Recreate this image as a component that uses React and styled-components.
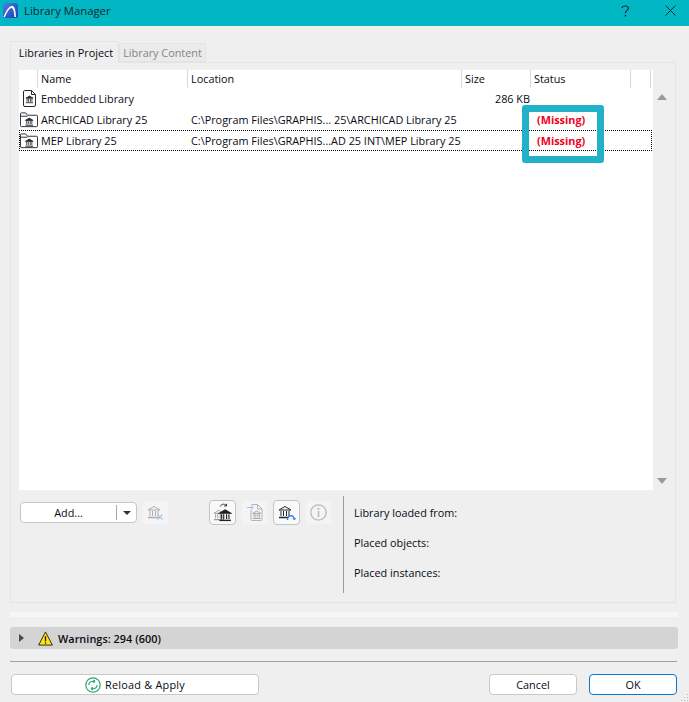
import React from "react";
import styled, { createGlobalStyle } from "styled-components";

const Global = createGlobalStyle`
  html, body { margin: 0; padding: 0; background: #efefef; }
  body { font-family: "Open Sans", "Noto Sans", "Liberation Sans", sans-serif; font-size: 10.85px; color: #0a0a14; }
`;

const Dialog = styled.div`
  width: 689px; height: 702px; overflow: hidden; position: relative;
  display: flex; flex-direction: column; background: #efefef;
`;
const TitleBar = styled.div`
  box-sizing: border-box; height: 26px; flex: none; background: #00b7c3; display: flex; align-items: center;
  padding: 0 0 5px 3px;
`;
const TitleText = styled.div`font-size: 11.3px; color: #10282c; margin-left: 6px; flex: 1;`;
const TitleButton = styled.div`
  width: ${p => p.$w}px; display: flex; justify-content: center; align-items: center; color: #10282c;
`;
const TabStrip = styled.div`
  display: flex; align-items: flex-end; height: 21px; margin: 15px 0 0 10px; position: relative; z-index: 1; flex: none;
`;
const Tab = styled.div`
  box-sizing: border-box; display: flex; align-items: center; justify-content: center;
  width: ${p => p.$w}px;
  height: ${p => (p.$active ? 22 : 19)}px;
  margin-bottom: ${p => (p.$active ? -1 : 0)}px;
  padding-left: ${p => (p.$active ? 3 : 0)}px;
  background: ${p => (p.$active ? "#efefef" : "#ebebeb")};
  color: ${p => (p.$active ? "#0a0a14" : "#858585")};
  border: 1px solid #e4e4e4;
  border-bottom: ${p => (p.$active ? "none" : "1px solid #e4e4e4")};
  border-radius: 2px 2px 0 0;
`;
const Panel = styled.div`
  box-sizing: border-box; width: 666px; height: 541px; margin-left: 10px; flex: none;
  border: 1px solid #e4e4e4; padding: 7px 0 0 8px;
`;
const ListArea = styled.div`display: flex; height: 420px;`;
const List = styled.div`
  width: 634px; background: #fff; position: relative; flex: none;
`;
const cols = "19px 150px 274px 69px 100px 20px";
const HeaderRow = styled.div`
  display: grid; grid-template-columns: ${cols}; height: 18px; width: 632px;
`;
const HeaderCell = styled.div`
  box-sizing: border-box; border-right: 1px solid #d9d9d9; padding-left: 3px; line-height: 18px;
`;
const Row = styled.div`
  display: grid; grid-template-columns: ${cols}; height: 21px; width: 633px;
  align-items: center; white-space: nowrap;
  outline: ${p => (p.$focus ? "1px dotted #000" : "none")};
  outline-offset: -1px;
`;
const IconCell = styled.div`display: flex; padding-left: ${p => (p.$doc ? 4 : 1)}px;`;
const Cell = styled.div`padding-left: 3px;`;
const SizeCell = styled.div`text-align: right; padding-right: 1px;`;
const Missing = styled.div`color: #f2001e; font-weight: 700; padding-left: 6px;`;
const Highlight = styled.div`
  position: absolute; left: 503px; top: 35px; width: 82px; height: 58px; box-sizing: border-box;
  border: 7px solid #23b0c9; border-radius: 3px;
`;
const ScrollColumn = styled.div`
  flex: none; width: 18px; display: flex; flex-direction: column; justify-content: space-between;
  align-items: center; padding: 24px 0 6px; box-sizing: border-box;
`;
const Arrow = styled.div`
  width: 0; height: 0; border-left: 5px solid transparent; border-right: 5px solid transparent;
  ${p => (p.$down ? "border-top: 6px solid #9a9a9a;" : "border-bottom: 6px solid #9a9a9a;")}
`;
const Lower = styled.div`display: flex; height: 97px; margin-top: 6px;`;
const ToolArea = styled.div`width: 324px; flex: none; display: flex; align-items: flex-start; padding-top: 4px; box-sizing: border-box;`;
const AddButton = styled.div`
  box-sizing: border-box; width: 117px; height: 21px; margin: 2px 0 0 1px; background: #fff;
  border: 1px solid #c6c6c6; border-radius: 4px; display: flex; align-items: center; flex: none;
`;
const AddLabel = styled.div`width: 95px; text-align: center; border-right: 1px solid #a8a8a8; line-height: 15px;`;
const Caret = styled.div`
  margin-left: 6px; width: 0; height: 0; border-left: 4px solid transparent; border-right: 4px solid transparent;
  border-top: 4px solid #333;
`;
const IconButton = styled.div`
  box-sizing: border-box; width: 27px; height: 25px; flex: none; margin-left: ${p => p.$ml ?? 5}px;
  display: flex; align-items: center; justify-content: center; border-radius: 4px;
  background: ${p => (p.$on ? "#f9f9f9" : "#f4f4f4")};
  border: 1px solid ${p => (p.$on ? "#c4c4c4" : "#f0f0f0")};
`;
const InfoColumn = styled.div`
  border-left: 1px solid #9c9c9c; padding: 10px 0 0 10px; display: flex; flex-direction: column; gap: 16px;
`;
const InfoLabel = styled.div`line-height: 14px;`;
const Strip = styled.div`height: 5px; width: 668px; margin: 9px 0 0 10px; background: #f6f6f6; flex: none;`;
const WarningBar = styled.div`
  height: 22px; width: 668px; margin: 10px 0 0 10px; background: #d4d4d4; border-radius: 3px; flex: none;
  display: flex; align-items: center; font-weight: 600;
`;
const Chevron = styled.div`
  width: 0; height: 0; margin-left: 9px; border-top: 4px solid transparent; border-bottom: 4px solid transparent;
  border-left: 5px solid #4a4a4a;
`;
const WarnIconBox = styled.div`margin-left: 14px; display: flex;`;
const WarnText = styled.div`margin-left: 5px; letter-spacing: .05px;`;
const Rule = styled.div`height: 1px; width: 667px; margin: 12px 0 0 10px; background: #a2a2a2; flex: none;`;
const Footer = styled.div`display: flex; width: 666px; margin: 12px 0 0 11px; height: 21px; flex: none;`;
const Button = styled.div`
  box-sizing: border-box; height: 21px; width: ${p => p.$w}px; margin-left: ${p => p.$ml ?? 0}px; flex: none;
  background: #fff; border: 1px solid ${p => (p.$primary ? "#0b78d0" : "#c8c8c8")}; border-radius: 4px;
  display: flex; align-items: center; justify-content: center; gap: 4px;
  letter-spacing: ${p => p.$track ?? 0}px;
`;
const Grip = styled.div`
  position: absolute; right: 1px; bottom: 1px; width: 8px; height: 8px;
  background-image: radial-gradient(circle, #b5b5b5 1px, transparent 1px);
  background-size: 3px 3px;
  clip-path: polygon(100% 0, 100% 100%, 0 100%);
`;

const Temple = ({ c = "#23292e", sw = 1, solid = true }) => (
  <g stroke={c} fill="none" strokeWidth={sw}>
    <path d="M1 5 L7 1.5 L13 5 Z" fill={solid ? c : "none"} />
    <path d="M3 6v5M5.500 6v5M8.500 6v5M11 6v5" />
    <path d="M1 12.500h12" strokeWidth="1.500" />
  </g>
);
const Logo = () => (
  <svg width="15" height="15" viewBox="0 0 15 15">
    <defs>
      <linearGradient id="lg" x1="0" y1="0" x2="1" y2="1">
        <stop offset="0" stopColor="#4a7fe8" />
        <stop offset="1" stopColor="#1c3fae" />
      </linearGradient>
    </defs>
    <rect width="15" height="15" rx="2.500" fill="url(#lg)" />
    <path d="M0.500 14 C4 5 7 3 9 3 C11 3 12.500 5 13 14 L11.500 14 C11 8 10 5 8.500 5 C6.500 5 4 9 2 14 Z" fill="#fff" />
  </svg>
);
const DocIcon = () => (
  <svg width="13" height="17" viewBox="0 0 13 17">
    <path d="M1.500 .5H8.500L12.500 4.500V15A1.500 1.500 0 0 1 11 16.500H2A1.500 1.500 0 0 1 .5 15V2A1.500 1.500 0 0 1 1.500 .5Z" fill="#fff" stroke="#23292e" />
    <path d="M8.500 .5V4.500H12.500" fill="none" stroke="#23292e" />
    <g transform="translate(2.300 5.200) scale(.6)"><Temple sw={1.400} /></g>
  </svg>
);
const FolderIcon = () => (
  <svg width="19" height="16" viewBox="0 0 19 16">
    <path d="M.5 14V1.500A1 1 0 0 1 1.500 .5H6L8 3H17.500A1 1 0 0 1 18.500 4V14A1 1 0 0 1 17.500 15H1.500A1 1 0 0 1 .5 14Z" fill="#fff" stroke="#23292e" />
    <path d="M.5 4H8" fill="none" stroke="#23292e" />
    <g transform="translate(5 5) scale(.68)"><Temple sw={1.300} /></g>
  </svg>
);
const DeleteLib = () => (
  <svg width="18" height="16" viewBox="0 0 18 16">
    <Temple c="#adadad" solid={false} />
    <path d="M10.500 9.500l5 5M15.500 9.500l-5 5" stroke="#a9c8f0" strokeWidth="1.300" />
  </svg>
);
const SwapLib = () => (
  <svg width="19" height="19" viewBox="0 0 19 19">
    <g transform="translate(0 6) scale(.85)"><Temple c="#9a9a9a" solid={false} /></g>
    <g transform="translate(5.500 5.500) scale(.95)"><Temple c="#1e2428" sw={1.200} /></g>
    <path d="M7 3.500C9 .5 12 .5 13.500 3M13.500 3V.8M13.500 3H11.200" fill="none" stroke="#333" strokeWidth="1" />
  </svg>
);
const ImportDoc = () => (
  <svg width="16" height="17" viewBox="0 0 16 17">
    <path d="M4.500 .5H10.500L15 5V15.500A1 1 0 0 1 14 16.500H5A1 1 0 0 1 4 15.500V6" fill="#f4f4f4" stroke="#b4b4b4" />
    <path d="M10.500 .5V5H15" fill="none" stroke="#b4b4b4" />
    <g transform="translate(5 6) scale(.68)"><Temple c="#a6a6a6" sw={1.300} solid={false} /></g>
    <path d="M0 3.500H6M4 1.500L6.300 3.500L4 5.500" fill="none" stroke="#9cc0f2" strokeWidth="1" />
  </svg>
);
const RefreshLib = () => (
  <svg width="18" height="16" viewBox="0 0 18 16">
    <Temple c="#23292e" solid={false} />
    <path d="M9.500 15C9.500 9.500 16 9.500 16.300 14" fill="#f9f9f9" stroke="#2f80e8" strokeWidth="1.300" />
    <path d="M14.800 13L16.300 15L17.800 13" fill="none" stroke="#2f80e8" strokeWidth="1" />
  </svg>
);
const InfoIcon = () => (
  <svg width="17" height="17" viewBox="0 0 17 17">
    <circle cx="8.500" cy="8.500" r="7.700" fill="none" stroke="#b8b8b8" strokeWidth="1.200" />
    <rect x="7.700" y="7" width="1.600" height="6" fill="#b8b8b8" />
    <circle cx="8.500" cy="4.800" r="1.100" fill="#b8b8b8" />
  </svg>
);
const WarnIcon = () => (
  <svg width="15" height="15" viewBox="0 0 16 16">
    <path d="M8 1L15.300 15H.7Z" fill="#fde50b" stroke="#222" strokeWidth="1" strokeLinejoin="round" />
    <rect x="7.300" y="5.500" width="1.400" height="5.500" fill="#222" />
    <rect x="7.300" y="12" width="1.400" height="1.500" fill="#222" />
  </svg>
);
const ReloadIcon = () => (
  <svg width="16" height="16" viewBox="0 0 16 16">
    <circle cx="8" cy="8" r="7.200" fill="#fff" stroke="#2aa86b" strokeWidth="1.200" />
    <path d="M3.800 8C3.800 5 7 3.500 10 4.700M10 4.700L8.500 2.900M10 4.700L7.900 5.500" fill="none" stroke="#2aa86b" strokeWidth="1.200" />
    <path d="M12.200 8C12.200 11 9 12.500 6 11.300M6 11.300L7.500 13.100M6 11.300L8.100 10.500" fill="none" stroke="#2aa86b" strokeWidth="1.200" />
  </svg>
);

const libs = [
  { name: "Embedded Library", doc: true, size: "286 KB" },
  { name: "ARCHICAD Library 25", loc: "C:\\Program Files\\GRAPHIS... 25\\ARCHICAD Library 25", missing: true },
  { name: "MEP Library 25", loc: "C:\\Program Files\\GRAPHIS...AD 25 INT\\MEP Library 25", missing: true, focus: true },
];

export default function App() {
  return (
    <Dialog>
      <Global />
      <TitleBar>
        <Logo />
        <TitleText>Library Manager</TitleText>
        <TitleButton $w={52}>
          <svg width="9" height="12" viewBox="0 0 9 12"><path d="M1 3C1 .5 7.500 .2 7.500 3.200C7.500 5.500 4.300 5.300 4.300 8.200" fill="none" stroke="#10282c" strokeWidth="1.100" /><rect x="3.700" y="10" width="1.300" height="1.500" fill="#10282c" /></svg>
        </TitleButton>
        <TitleButton $w={38}>
          <svg width="11" height="11" viewBox="0 0 11 11"><path d="M.5 .5L10.500 10.500M10.500 .5L.5 10.500" stroke="#10282c" strokeWidth="1" /></svg>
        </TitleButton>
      </TitleBar>
      <TabStrip>
        <Tab $active $w={109}>Libraries in Project</Tab>
        <Tab $w={87}>Library Content</Tab>
      </TabStrip>
      <Panel>
        <ListArea>
          <List>
            <HeaderRow>
              <HeaderCell />
              <HeaderCell>Name</HeaderCell>
              <HeaderCell>Location</HeaderCell>
              <HeaderCell>Size</HeaderCell>
              <HeaderCell>Status</HeaderCell>
              <HeaderCell />
            </HeaderRow>
            {libs.map(l => (
              <Row key={l.name} $focus={l.focus}>
                <IconCell $doc={l.doc}>{l.doc ? <DocIcon /> : <FolderIcon />}</IconCell>
                <Cell>{l.name}</Cell>
                <Cell>{l.loc}</Cell>
                <SizeCell>{l.size}</SizeCell>
                {l.missing ? <Missing>(Missing)</Missing> : <div />}
                <div />
              </Row>
            ))}
            <Highlight />
          </List>
          <ScrollColumn>
            <Arrow />
            <Arrow $down />
          </ScrollColumn>
        </ListArea>
        <Lower>
          <ToolArea>
            <AddButton>
              <AddLabel>Add...</AddLabel>
              <Caret />
            </AddButton>
            <IconButton><DeleteLib /></IconButton>
            <IconButton $on $ml={40}><SwapLib /></IconButton>
            <IconButton><ImportDoc /></IconButton>
            <IconButton $on><RefreshLib /></IconButton>
            <IconButton><InfoIcon /></IconButton>
          </ToolArea>
          <InfoColumn>
            <InfoLabel>Library loaded from:</InfoLabel>
            <InfoLabel>Placed objects:</InfoLabel>
            <InfoLabel>Placed instances:</InfoLabel>
          </InfoColumn>
        </Lower>
      </Panel>
      <Strip />
      <WarningBar>
        <Chevron />
        <WarnIconBox><WarnIcon /></WarnIconBox>
        <WarnText>Warnings: 294 (600)</WarnText>
      </WarningBar>
      <Rule />
      <Footer>
        <Button $w={248} $track={0.25}><ReloadIcon />Reload &amp; Apply</Button>
        <Button $w={88} $ml={230}>Cancel</Button>
        <Button $w={88} $ml={12} $primary>OK</Button>
      </Footer>
      <Grip />
    </Dialog>
  );
}
